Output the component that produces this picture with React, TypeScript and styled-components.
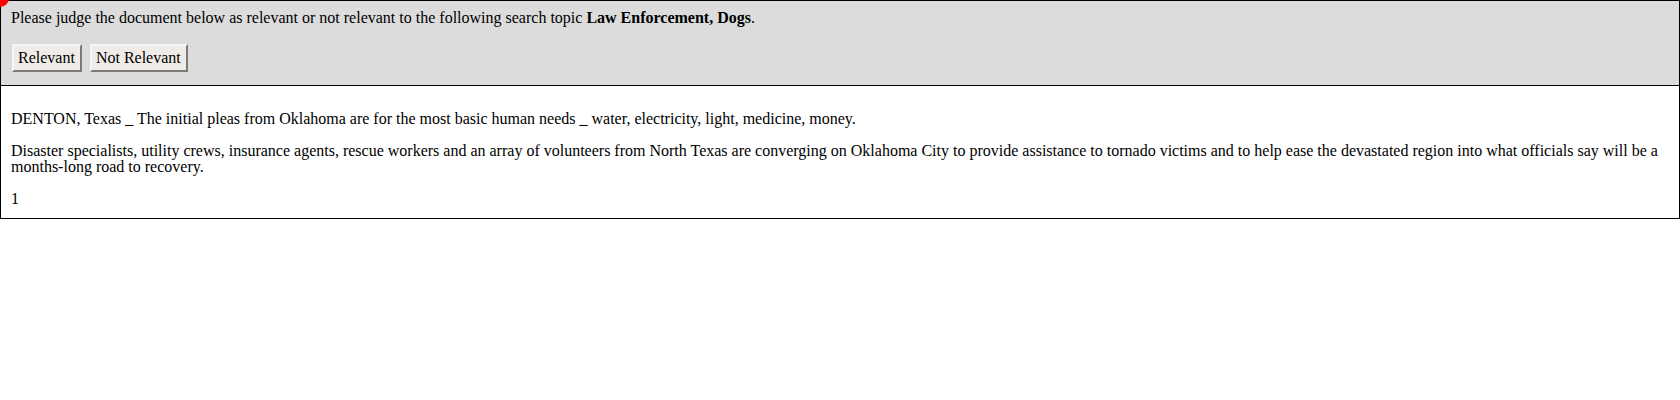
import styled, { createGlobalStyle } from "styled-components";

const GlobalStyle = createGlobalStyle`
  body {
    margin: 0;
    font-family: "Liberation Serif", "Times New Roman", serif;
    font-size: 16px;
    color: #000;
    background: #fff;
  }
`;

const App: React.FC = () => {
  return (
    <>
      <GlobalStyle />
      <Page>
        <JudgePanel>
          <Prompt>
            Please judge the document below as relevant or not relevant to the
            following search topic <b>Law Enforcement, Dogs</b>.
          </Prompt>
          <ButtonRow>
            <JudgeButton type="button">Relevant</JudgeButton>
            <JudgeButton type="button">Not Relevant</JudgeButton>
          </ButtonRow>
        </JudgePanel>
        <DocumentPanel>
          <Paragraph>
            DENTON, Texas _ The initial pleas from Oklahoma are for the most
            basic human needs _ water, electricity, light, medicine, money.
          </Paragraph>
          <Paragraph>
            Disaster specialists, utility crews, insurance agents, rescue workers
            and an array of volunteers from North Texas are converging on
            Oklahoma City to provide assistance to tornado victims and to help
            ease the devastated region into what officials say will be a
            months-long road to recovery.
          </Paragraph>
          <PageNumber>1</PageNumber>
        </DocumentPanel>
        <Marker />
      </Page>
    </>
  );
};

export default App;

const Page = styled.div`
  position: relative;
  width: 1680px;
  box-sizing: border-box;
`;

// red cursor dot peeking in at the top-left corner
const Marker = styled.div`
  position: absolute;
  z-index: 1;
  top: -11px;
  left: -9px;
  width: 18px;
  height: 18px;
  border-radius: 50%;
  background: #ff0000;
`;

const JudgePanel = styled.div`
  background: #dcdcdc;
  border: 1px solid #000;
  padding: 8px 10px 13px;
`;

const Prompt = styled.div`
  line-height: 18px;
`;

const ButtonRow = styled.div`
  display: flex;
  gap: 8px;
  margin-top: 17px;
  padding-left: 1px;
`;

const JudgeButton = styled.button`
  font-family: "Liberation Serif", "Times New Roman", serif;
  font-size: 16px;
  height: 28px;
  padding: 0 5px 0 4px;
  background: #efece7;
  color: #000;
  border: 2px solid;
  border-top-color: #f7f6f4;
  border-left-color: #f7f6f4;
  border-right-color: #7a7a7a;
  border-bottom-color: #7a7a7a;
`;

const DocumentPanel = styled.div`
  border: 1px solid #000;
  border-top: none;
  padding: 9px 10px 11px;
`;

const Paragraph = styled.p`
  margin: 16px 0;
  line-height: 16px;
`;

const PageNumber = styled.div`
  line-height: 16px;
`;
